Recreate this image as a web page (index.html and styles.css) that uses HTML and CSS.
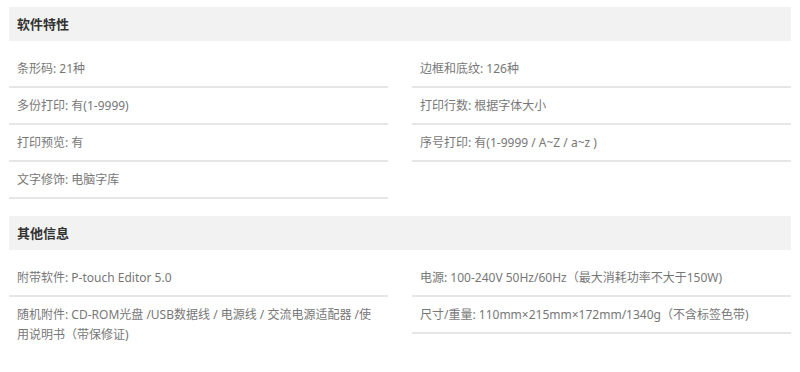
FILE: index.html
```html
<!DOCTYPE html>
<html lang="zh-CN">
<head>
<meta charset="utf-8">
<title>软件特性</title>
<link rel="stylesheet" href="styles.css">
</head>
<body>
<div class="page">
  <section class="spec">
    <h2 class="spec-title">软件特性</h2>
    <div class="spec-grid">
      <ul class="spec-col">
        <li class="spec-item">条形码: 21种</li>
        <li class="spec-item">多份打印: 有(1-9999)</li>
        <li class="spec-item">打印预览: 有</li>
        <li class="spec-item">文字修饰: 电脑字库</li>
      </ul>
      <ul class="spec-col">
        <li class="spec-item">边框和底纹: 126种</li>
        <li class="spec-item">打印行数: 根据字体大小</li>
        <li class="spec-item">序号打印: 有(1-9999 / A~Z / a~z )</li>
      </ul>
    </div>
  </section>
  <section class="spec">
    <h2 class="spec-title">其他信息</h2>
    <div class="spec-grid">
      <ul class="spec-col">
        <li class="spec-item">附带软件: P-touch Editor 5.0</li>
        <li class="spec-item no-line">随机附件: CD-ROM光盘 /USB数据线 / 电源线 / 交流电源适配器 /使用说明书（带保修证)</li>
      </ul>
      <ul class="spec-col">
        <li class="spec-item">电源: 100-240V 50Hz/60Hz（最大消耗功率不大于150W)</li>
        <li class="spec-item">尺寸/重量: 110mm×215mm×172mm/1340g（不含标签色带)</li>
      </ul>
    </div>
  </section>
</div>
</body>
</html>
```
FILE: styles.css
```css
* { box-sizing: border-box; }
html, body { margin: 0; padding: 0; background: #fff; }
body {
  font-family: "Noto Sans", "Noto Sans CJK SC", sans-serif;
  color: #777;
}
.page {
  padding: 7px 9px 0 9px;
  display: flex;
  flex-direction: column;
  gap: 17px;
}
.spec-title {
  margin: 0;
  height: 34px;
  line-height: 34px;
  padding-left: 8px;
  background: #f2f2f2;
  font-size: 13px;
  font-weight: 700;
  color: #333;
}
.spec-grid {
  display: grid;
  grid-template-columns: 1fr 1fr;
  column-gap: 24px;
  margin-top: 10px;
}
.spec-col {
  list-style: none;
  margin: 0;
  padding: 0;
}
.spec-item {
  padding: 8px 8px 7px;
  font-size: 12px;
  line-height: 20px;
  border-bottom: 2px solid #e6e6e6;
}
.spec-item.no-line { border-bottom: none; }
```
